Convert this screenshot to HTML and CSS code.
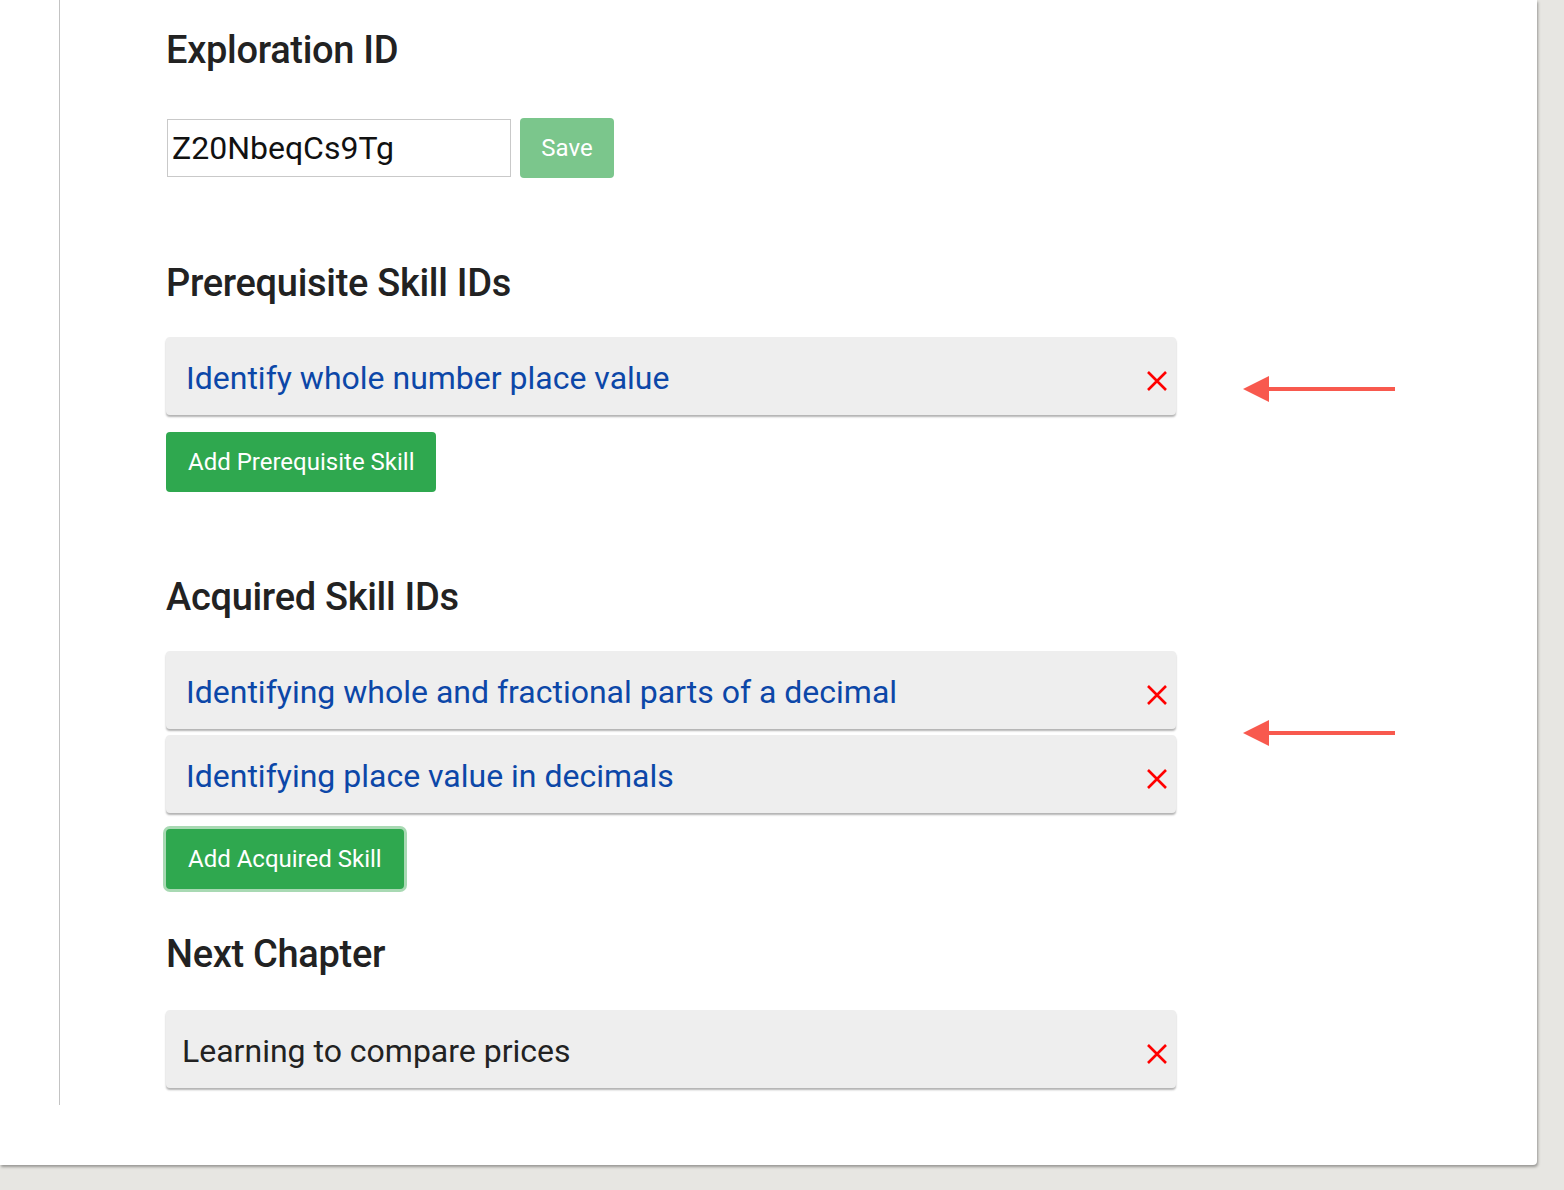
FILE: index.html
```html
<!DOCTYPE html>
<html lang="en">
<head>
<meta charset="utf-8">
<title>Chapter Editor</title>
<link rel="stylesheet" href="styles.css">
</head>
<body>
<div class="panel">
  <div class="inner">
    <h2 class="heading heading-first">Exploration ID</h2>
    <div class="id-row">
      <input class="id-input" type="text" value="Z20NbeqCs9Tg">
      <button class="btn btn-disabled">Save</button>
    </div>

    <h2 class="heading">Prerequisite Skill IDs</h2>
    <div class="skill-group">
      <div class="card">
        <span class="card-text link">Identify whole number place value</span>
        <svg class="x-icon" viewBox="0 0 22 22" width="22" height="22"><path d="M2 2L20 20M20 2L2 20" stroke="#ff0000" stroke-width="2.6" fill="none"/></svg>
      </div>
      <svg class="arrow arrow-pre" viewBox="0 0 154 26" width="154" height="26"><path d="M26 13H152" stroke="#f8594e" stroke-width="4"/><path d="M0 13L26 0V26Z" fill="#f8594e"/></svg>
    </div>
    <button class="btn btn-add">Add Prerequisite Skill</button>

    <h2 class="heading heading-acq">Acquired Skill IDs</h2>
    <div class="skill-group">
      <div class="card">
        <span class="card-text link">Identifying whole and fractional parts of a decimal</span>
        <svg class="x-icon" viewBox="0 0 22 22" width="22" height="22"><path d="M2 2L20 20M20 2L2 20" stroke="#ff0000" stroke-width="2.6" fill="none"/></svg>
      </div>
      <div class="card">
        <span class="card-text link">Identifying place value in decimals</span>
        <svg class="x-icon" viewBox="0 0 22 22" width="22" height="22"><path d="M2 2L20 20M20 2L2 20" stroke="#ff0000" stroke-width="2.6" fill="none"/></svg>
      </div>
      <svg class="arrow arrow-acq" viewBox="0 0 154 26" width="154" height="26"><path d="M26 13H152" stroke="#f8594e" stroke-width="4"/><path d="M0 13L26 0V26Z" fill="#f8594e"/></svg>
    </div>
    <button class="btn btn-add btn-focus">Add Acquired Skill</button>

    <h2 class="heading heading-next">Next Chapter</h2>
    <div class="card">
      <span class="card-text plain">Learning to compare prices</span>
      <svg class="x-icon" viewBox="0 0 22 22" width="22" height="22"><path d="M2 2L20 20M20 2L2 20" stroke="#ff0000" stroke-width="2.6" fill="none"/></svg>
    </div>
  </div>
</div>
</body>
</html>
```

FILE: styles.css
```css
html, body {
  margin: 0;
  padding: 0;
}
body {
  background: #e7e6e2;
  font-family: Roboto, "Liberation Sans", sans-serif;
  width: 1564px;
  height: 1190px;
  overflow: hidden;
}
.panel {
  width: 1537px;
  height: 1165px;
  background: #ffffff;
  border-radius: 0 0 4px 0;
  box-shadow: 1px 2px 3px rgba(0, 0, 0, 0.35);
}
.inner {
  margin-left: 59px;
  border-left: 1px solid #c3c3c3;
  height: 1075px;
  padding: 30px 0 0 106px;
  box-sizing: content-box;
}
.heading {
  margin: 0;
  font-size: 38px;
  line-height: 40px;
  height: 40px;
  font-weight: 500;
  color: #222222;
  letter-spacing: -0.3px;
}
.heading-first { margin-bottom: 48px; }
.id-row {
  display: flex;
  align-items: center;
  gap: 9px;
  height: 59px;
  margin-bottom: 86px;
}
.heading + .skill-group { margin-top: 34px; }
.heading-next + .card { margin-top: 36px; }
.id-input {
  width: 344px;
  height: 58px;
  box-sizing: border-box;
  margin: 0 0 0 1px;
  border: 1px solid #c9c9c9;
  padding: 0 4px;
  font-family: Roboto, "Liberation Sans", sans-serif;
  font-size: 32px;
  color: #111111;
  outline: none;
}
.btn {
  border: none;
  border-radius: 4px;
  color: #ffffff;
  font-family: Roboto, "Liberation Sans", sans-serif;
  font-size: 24px;
  height: 60px;
  padding: 0 22px;
  cursor: pointer;
}
.btn-disabled {
  background: #7bc68c;
  width: 94px;
  padding: 0;
}
.btn-add {
  display: block;
  background: #2fa84f;
  margin-top: 17px;
}
.btn-focus {
  margin-top: 16px;
  box-shadow: 0 0 0 3px #a8d9b3;
}
.heading-acq { margin-top: 85px; }
.heading-next { margin-top: 45px; }
.skill-group {
  position: relative;
  width: 1010px;
  display: flex;
  flex-direction: column;
  gap: 6px;
}
.card {
  width: 1010px;
  height: 78px;
  box-sizing: border-box;
  background: #eeeeee;
  border-radius: 4px;
  box-shadow: 0 2px 2px rgba(0, 0, 0, 0.3);
  display: flex;
  align-items: center;
  justify-content: space-between;
  padding: 0 8px 0 20px;
}
.card-text {
  font-size: 32px;
  line-height: 40px;
  padding-top: 4px;
}
.link { color: #0c47a8; }
.plain { color: #222222; margin-left: -4px; }
.x-icon {
  margin-top: 10px;
}
.arrow {
  position: absolute;
  left: 1077px;
}
.arrow-pre { top: 39px; }
.arrow-acq { top: 69px; }
```
